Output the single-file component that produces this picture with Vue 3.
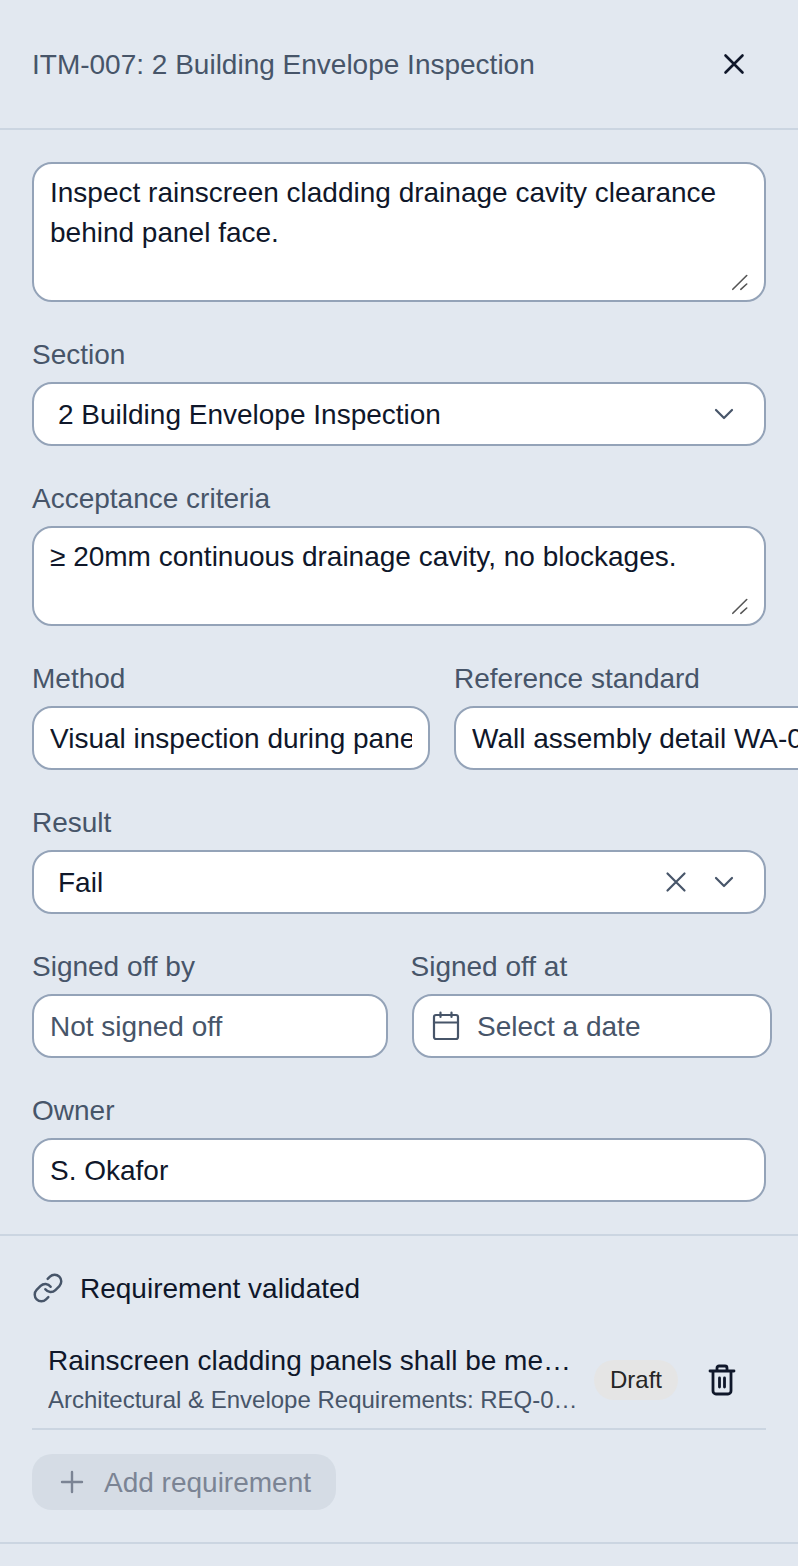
<script setup>
const description = 'Inspect rainscreen cladding drainage cavity clearance behind panel face.'
const criteria = '≥ 20mm continuous drainage cavity, no blockages.'
</script>

<template>
  <div class="panel">
    <header class="head">
      <h1 class="title">ITM-007: 2 Building Envelope Inspection</h1>
      <button class="close" type="button" aria-label="Close">
        <svg width="28" height="28" viewBox="0 0 28 28" fill="none" stroke="currentColor" stroke-width="2.6" stroke-linecap="round"><path d="M5.5 5.5 22.5 22.5M22.5 5.5 5.5 22.5" /></svg>
      </button>
    </header>

    <section class="form">
      <div class="area-wrap">
        <textarea class="control area tall" :value="description"></textarea>
        <svg class="grip" width="16" height="18" viewBox="0 0 16 18" fill="none" stroke="#555" stroke-width="1.6" stroke-linecap="round"><path d="M.8 15.3 14.7 1.5M8.8 15.3 14.7 10" /></svg>
      </div>

      <div class="field">
        <label class="label">Section</label>
        <div class="control select">
          <span class="select-value">2 Building Envelope Inspection</span>
          <svg class="chev" width="20" height="12" viewBox="0 0 20 12" fill="none" stroke="currentColor" stroke-width="2.2" stroke-linecap="round" stroke-linejoin="round"><path d="M2 2 10 10 18 2" /></svg>
        </div>
      </div>

      <div class="field">
        <label class="label">Acceptance criteria</label>
        <div class="area-wrap">
          <textarea class="control area short" :value="criteria"></textarea>
          <svg class="grip" width="16" height="18" viewBox="0 0 16 18" fill="none" stroke="#555" stroke-width="1.6" stroke-linecap="round"><path d="M.8 15.3 14.7 1.5M8.8 15.3 14.7 10" /></svg>
        </div>
      </div>

      <div class="split split-a">
        <div class="field">
          <label class="label">Method</label>
          <input class="control text" value="Visual inspection during panel installation" />
        </div>
        <div class="field">
          <label class="label">Reference standard</label>
          <input class="control text" value="Wall assembly detail WA-01 and manufacturer guide" />
        </div>
      </div>

      <div class="field">
        <label class="label">Result</label>
        <div class="control select">
          <span class="select-value">Fail</span>
          <svg class="clear" width="22" height="22" viewBox="0 0 22 22" fill="none" stroke="currentColor" stroke-width="2.2" stroke-linecap="round"><path d="M2.5 2.5 19.5 19.5M19.5 2.5 2.5 19.5" /></svg>
          <svg class="chev" width="20" height="12" viewBox="0 0 20 12" fill="none" stroke="currentColor" stroke-width="2.2" stroke-linecap="round" stroke-linejoin="round"><path d="M2 2 10 10 18 2" /></svg>
        </div>
      </div>

      <div class="split split-b">
        <div class="field">
          <label class="label">Signed off by</label>
          <input class="control text" placeholder="Not signed off" />
        </div>
        <div class="field">
          <label class="label label-date">Signed off at</label>
          <div class="control date">
            <svg width="28" height="30" viewBox="0 0 28 30" fill="none" stroke="#475569" stroke-width="2.2" stroke-linecap="round" stroke-linejoin="round"><rect x="2" y="4" width="24" height="24" rx="2" /><path d="M2 11.5H26M8.5 1.5V6M19.5 1.5V6" /></svg>
            <input class="date-input" placeholder="Select a date" />
          </div>
        </div>
      </div>

      <div class="field">
        <label class="label">Owner</label>
        <input class="control text" value="S. Okafor" />
      </div>
    </section>

    <section class="links">
      <div class="links-head">
        <svg width="32" height="32" viewBox="0 0 24 24" fill="none" stroke="#475569" stroke-width="1.85" stroke-linecap="round" stroke-linejoin="round"><path d="M10 13a5 5 0 0 0 7.54.54l3-3a5 5 0 0 0-7.07-7.07l-1.72 1.71" /><path d="M14 11a5 5 0 0 0-7.54-.54l-3 3a5 5 0 0 0 7.07 7.07l1.71-1.71" /></svg>
        <span class="line">Requirement validated</span>
      </div>

      <div class="req">
        <div class="req-text">
          <div class="req-title">Rainscreen cladding panels shall be mechanically fixed</div>
          <div class="req-sub">Architectural &amp; Envelope Requirements: REQ-014 Rainscreen</div>
        </div>
        <span class="pill">Draft</span>
        <button class="trash" type="button" aria-label="Remove">
          <svg width="28" height="32" viewBox="0 0 28 32" fill="none" stroke="#0f172a" stroke-width="2.8" stroke-linecap="round" stroke-linejoin="round"><path d="M2 7H26M5 7V27a3 3 0 0 0 3 3H20a3 3 0 0 0 3-3V7M9 7V4a2 2 0 0 1 2-2H17a2 2 0 0 1 2 2V7M11.5 14V23M16.5 14V23" /></svg>
        </button>
      </div>

      <button class="add" type="button" disabled>
        <svg width="24" height="24" viewBox="0 0 24 24" fill="none" stroke="currentColor" stroke-width="2.4" stroke-linecap="round"><path d="M12 2V22M2 12H22" /></svg>
        <span class="line">Add requirement</span>
      </button>
    </section>
  </div>
</template>

<style>
html, body { margin: 0; background: #e2e8f0; }
</style>

<style scoped>
.panel {
  width: 798px;
  height: 1566px;
  overflow: hidden;
  background: #e2e8f0;
  font-family: "Liberation Sans", Arial, sans-serif;
  font-size: 28px;
  line-height: 40px;
  color: #0f172a;
}
.head {
  height: 128px;
  display: flex;
  align-items: center;
  justify-content: space-between;
  padding: 0 50px 0 32px;
  border-bottom: 2px solid #cbd5e1;
}
.title { margin: 0; height: 40px; font-size: 28px; font-weight: 400; line-height: 42px; color: #475569; }
.close { display: flex; padding: 0; border: 0; background: none; color: #0f172a; }
.form {
  display: flex;
  flex-direction: column;
  gap: 32px;
  padding: 32px;
  border-bottom: 2px solid #cbd5e1;
}
.field { display: flex; flex-direction: column; gap: 8px; }
.label { color: #475569; height: 40px; line-height: 42px; }
.label-date { margin-left: -1px; }
.line { height: 40px; line-height: 42px; }
.control {
  box-sizing: border-box;
  width: 100%;
  margin: 0;
  background: #fff;
  border: 2px solid #94a3b8;
  border-radius: 20px;
  font: inherit;
  line-height: 40px;
  color: #0f172a;
  outline: none;
}
.area-wrap { position: relative; }
.area { display: block; padding: 9px 16px 7px; resize: none; }
.grip { position: absolute; right: 18px; bottom: 10px; pointer-events: none; }
.tall { height: 140px; }
.short { height: 100px; }
.text { height: 64px; padding: 2px 16px 0; }
.text::placeholder, .date-input::placeholder { color: #475569; opacity: 1; }
.select { height: 64px; display: flex; align-items: center; padding: 0 30px 0 24px; }
.select-value { flex: 1; height: 40px; line-height: 42px; }
.chev { color: #475569; }
.clear { color: #475569; margin-right: 27px; }
.split { display: grid; column-gap: 24px; }
.split-a { grid-template-columns: 398px 398px; }
.split-b { grid-template-columns: 355.5px 360.5px; }
.date { height: 64px; display: flex; align-items: center; gap: 17.5px; padding: 0 16px 0 18px; }
.date-input {
  flex: 1;
  min-width: 0;
  padding: 2px 0 0;
  border: 0;
  outline: none;
  background: none;
  font: inherit;
  color: #0f172a;
}
.links { padding: 32px 32px; border-bottom: 2px solid #cbd5e1; }
.links-head { display: flex; align-items: center; gap: 16px; height: 40px; }
.req {
  margin-top: 24px;
  display: flex;
  align-items: center;
  padding: 8px 30px 8px 16px;
  border-bottom: 2px solid #cbd5e1;
}
.req-text { width: 530px; min-width: 0; }
.req-title, .req-sub { white-space: nowrap; overflow: hidden; text-overflow: ellipsis; }
.req-title { height: 40px; line-height: 42px; }
.req-sub { font-size: 24px; color: #475569; }
.pill {
  margin-left: 16px;
  padding: 0 16px;
  height: 40px;
  border-radius: 20px;
  background: #e5e5e5;
  font-size: 24px;
  color: #262626;
}
.trash { margin-left: 30px; display: flex; padding: 0; border: 0; background: none; }
.add {
  margin-top: 24px;
  height: 56px;
  display: flex;
  align-items: center;
  gap: 20px;
  padding: 0 25px 0 28px;
  border: 0;
  border-radius: 20px;
  background: #d5dce5;
  font: inherit;
  color: #7b8494;
}
</style>
